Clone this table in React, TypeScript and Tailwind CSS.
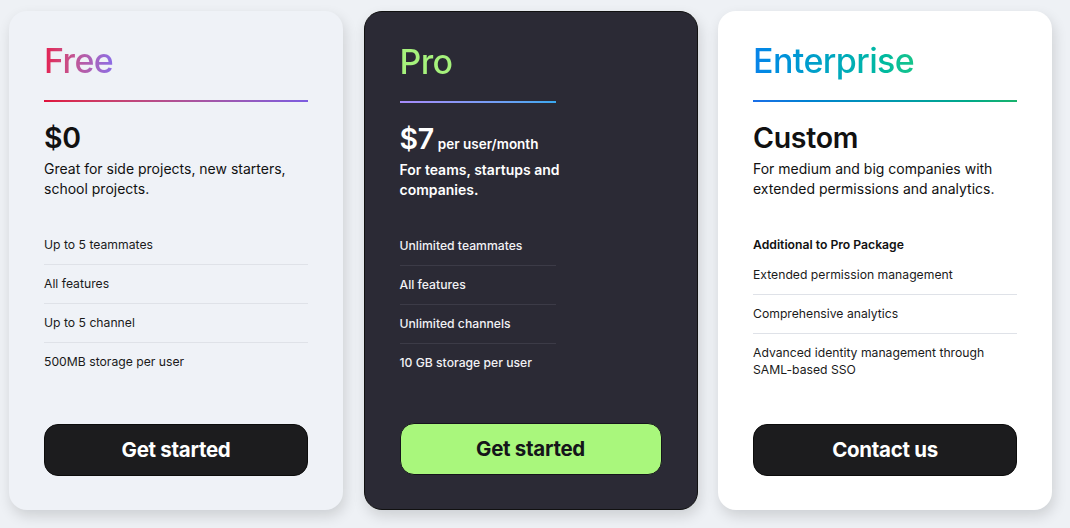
import type React from 'react';

type Plan = {
	name: string;
	nameClass: string;
	lineClass: string;
	price: string;
	unit?: string;
	blurb: string;
	heading?: string;
	features: string[];
	cta: string;
	dark?: boolean;
	cardClass: string;
	buttonClass: string;
	narrow?: boolean;
};

const plans: Plan[] = [
	{
		name: 'Free',
		nameClass: 'bg-gradient-to-r from-[#e5194f] to-[#8b6ce6]',
		lineClass: 'bg-gradient-to-r from-[#e0103c] to-[#7c5ce0]',
		price: '$0',
		blurb: 'Great for side projects, new starters, school projects.',
		features: [
			'Up to 5 teammates',
			'All features',
			'Up to 5 channel',
			'500MB storage per user',
		],
		cta: 'Get started',
		cardClass: 'bg-[#eff2f7] text-[#111]',
		buttonClass: 'bg-[#1c1c1e] text-white border-[#0c0c0c]',
	},
	{
		name: 'Pro',
		nameClass: 'bg-gradient-to-r from-[#a6f27c] to-[#a6f27c]',
		lineClass: 'bg-gradient-to-r from-[#a78bfa] to-[#38a8f0]',
		price: '$7',
		unit: 'per user/month',
		blurb: 'For teams, startups and companies.',
		features: [
			'Unlimited teammates',
			'All features',
			'Unlimited channels',
			'10 GB storage per user',
		],
		cta: 'Get started',
		dark: true,
		narrow: true,
		cardClass: 'bg-[#2b2a35] text-white border border-[#111]',
		buttonClass: 'bg-[#a9f77c] text-[#15151a] border-[#15151a]',
	},
	{
		name: 'Enterprise',
		nameClass: 'bg-gradient-to-r from-[#0b83ea] to-[#17c48a]',
		lineClass: 'bg-gradient-to-r from-[#1a6ee8] to-[#18b36c]',
		price: 'Custom',
		blurb: 'For medium and big companies with extended permissions and analytics.',
		heading: 'Additional to Pro Package',
		features: [
			'Extended permission management',
			'Comprehensive analytics',
			'Advanced identity management through SAML-based SSO',
		],
		cta: 'Contact us',
		cardClass: 'bg-white text-[#111]',
		buttonClass: 'bg-[#1c1c1e] text-white border-[#0c0c0c]',
	},
];

const PlanCard = ({ plan }: { plan: Plan }): React.JSX.Element => {
	const col = plan.narrow ? 'w-[156px]' : 'w-full';
	return (
		<div
			className={`flex h-[499px] w-[334px] shrink-0 flex-col rounded-[18px] px-[35px] pt-[30px] pb-[34px] shadow-[2px_6px_14px_rgba(0,0,0,0.14)] ${plan.cardClass}`}
		>
			<h2
				className={`self-start bg-clip-text text-[34px] leading-[40px] font-medium tracking-[-0.6px] text-transparent ${plan.nameClass}`}
			>
				{plan.name}
			</h2>
			<div className={`mt-[19px] h-[2px] ${col} ${plan.lineClass}`} />
			<div className="mt-[19px] flex items-baseline gap-[4px] whitespace-nowrap">
				<span className="text-[28.5px] leading-[34px] font-semibold tracking-[-0.3px]">
					{plan.price}
				</span>
				{plan.unit && (
					<span className="text-[13.5px] font-semibold">{plan.unit}</span>
				)}
			</div>
			<p
				className={`mt-[4px] text-[14px] leading-[20px] ${plan.dark ? 'w-[165px] font-semibold' : 'w-full'}`}
			>
				{plan.blurb}
			</p>
			<ul className={`mt-[37px] ${col}`}>
				{plan.heading && (
					<li className="pb-[13px] text-[12.2px] leading-[17px] font-semibold">
						{plan.heading}
					</li>
				)}
				{plan.features.map((feature, index) => (
					<li
						key={feature}
						className={`text-[12.2px] leading-[17px] ${plan.dark ? 'font-medium text-[#f2f2f5]' : 'text-[#1a1a1a]'} ${
							index < plan.features.length - 1
								? `mb-[10px] border-b pb-[11px] ${plan.dark ? 'border-[#3c3b47]' : 'border-[#dfe2e8]'}`
								: ''
						}`}
					>
						{feature}
					</li>
				))}
			</ul>
			<button
				type="button"
				className={`mt-auto h-[52px] w-full rounded-[14px] border text-[20.5px] font-bold tracking-[-0.3px] ${plan.buttonClass}`}
			>
				{plan.cta}
			</button>
		</div>
	);
};

const App = (): React.JSX.Element => (
	<div
		className="flex h-[528px] w-[1070px] gap-[20.5px] overflow-hidden bg-[#eef1f5] pt-[11px] pl-[9px]"
		style={{ fontFamily: 'Inter, "Noto Sans", sans-serif' }}
	>
		{plans.map((plan) => (
			<PlanCard key={plan.name} plan={plan} />
		))}
	</div>
);

export default App;
